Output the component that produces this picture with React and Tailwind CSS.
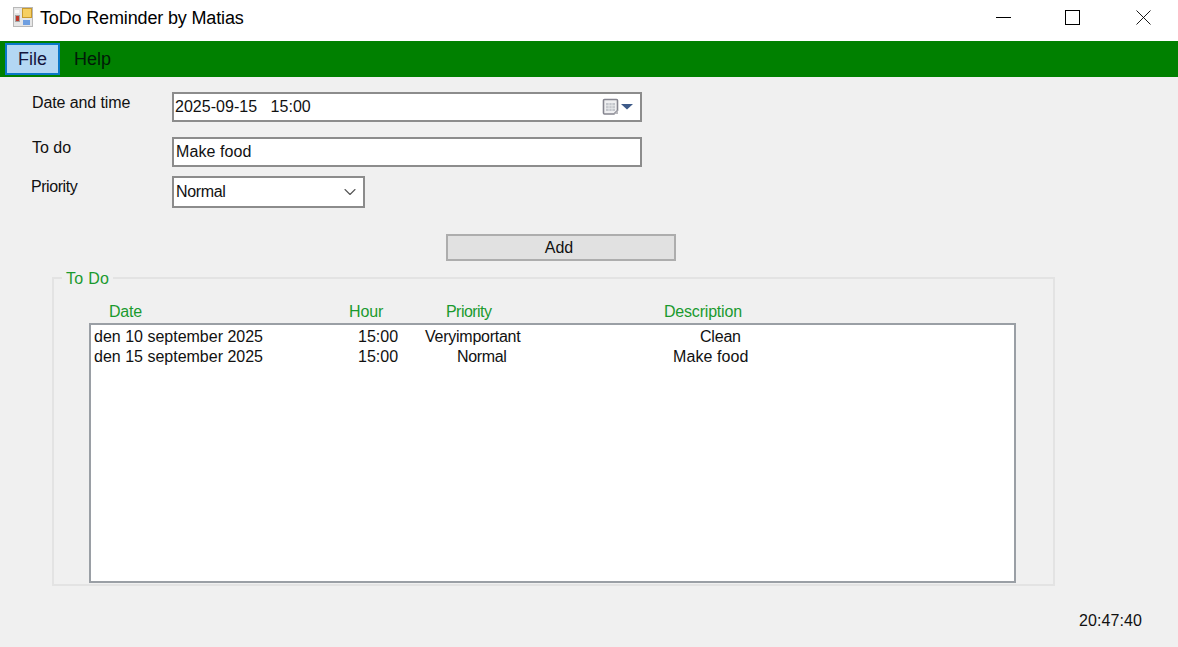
import { ChevronDown } from 'lucide-react';

const font = 'font-["Liberation_Sans",Arial,sans-serif]';

const todos = [
  { date: 'den 10 september 2025', hour: '15:00', priority: 'Veryimportant', priorityClass: 'pl-[27px] tracking-[-0.25px]', description: 'Clean', descClass: 'pl-[102px] tracking-[-0.2px]' },
  { date: 'den 15 september 2025', hour: '15:00', priority: 'Normal', priorityClass: 'pl-[59px] tracking-[-0.35px]', description: 'Make food', descClass: 'pl-[75px] tracking-[0.1px]' },
];

function AppIcon() {
  return (
    <svg width="20" height="20" viewBox="0 0 20 20" className="shrink-0">
      <rect x="0.5" y="0.5" width="19" height="19" fill="#e6e6e6" stroke="#b8b8b8" />
      <rect x="9.5" y="1.5" width="9" height="9" fill="#f6cf62" stroke="#c99a2e" />
      <rect x="2.5" y="8.5" width="4" height="6" fill="#c0392b" stroke="#a5a5a5" />
      <rect x="10" y="13" width="7" height="5" fill="#6f9fe0" />
      <rect x="2" y="3" width="4" height="3" fill="#fafafa" />
    </svg>
  );
}

function CalendarIcon() {
  return (
    <svg width="31" height="19" viewBox="0 0 31 19">
      <path d="M1.500 2.500a1 1 0 0 1 1-1h12a1 1 0 0 1 1 1v10l-3.500 3.500h-9.500a1 1 0 0 1-1-1z" fill="#efeff1" stroke="#85858f" strokeWidth="1.6" />
      <path d="M4 5h9v8H4z" fill="#c3c6cc" />
      <path d="M7 5v8M10 5v8M4 7.700h9M4 10.400h9" stroke="#e9eaec" strokeWidth="0.8" />
      <path d="M12 16l4-4v4z" fill="#b8b8bd" />
      <path d="M19 6h12l-6 5.500z" fill="#3d5a88" />
    </svg>
  );
}

export default function App() {
  return (
    <div className={`${font} w-[1178px] h-[647px] overflow-hidden flex flex-col bg-[#f0f0f0] text-[16px] leading-[18px] text-[#111]`}>
      {/* Title bar */}
      <div className="h-[41px] bg-white flex items-start">
        <div className="flex items-start pl-[13px] pt-[7px] gap-[7px] flex-1">
          <AppIcon />
          <span className="text-[18px] leading-[22px] tracking-[-0.15px] text-black">ToDo Reminder by Matias</span>
        </div>
        <div className="flex items-start pt-[10px] pr-[27px]">
          <svg width="15" height="15" viewBox="0 0 15 15">
            <path d="M0 7.500h15" stroke="#000" strokeWidth="1" />
          </svg>
          <svg width="15" height="15" viewBox="0 0 15 15" className="ml-[54px]">
            <rect x="0.500" y="0.500" width="14" height="14" fill="none" stroke="#000" strokeWidth="1" />
          </svg>
          <svg width="15" height="15" viewBox="0 0 15 15" className="ml-[56px]">
            <path d="M0.500 0.500l14 14M14.500 0.500l-14 14" stroke="#000" strokeWidth="0.9" />
          </svg>
        </div>
      </div>

      {/* Menu */}
      <div className="h-[36px] bg-[#008000] flex items-center pl-[5px] text-[18px]">
        <div className="w-[55px] h-[32px] bg-[#b3d7f3] border-2 border-[#0a78c8] flex items-center justify-center text-[#14143c]">File</div>
        <div className="ml-[14px] text-[#011a08]">Help</div>
      </div>

      {/* Form */}
      <div className="pt-[15px] flex flex-col">
        <div className="flex items-start h-[30px]">
          <span className="w-[172px] pl-[32px] pt-[2px] tracking-[-0.1px]">Date and time</span>
          <div className="w-[470px] h-[30px] bg-white border-2 border-[#8c8c8c] flex items-center justify-between pl-[1px] pr-[7px]">
            <span className="whitespace-pre tracking-[0.03px]">2025-09-15   15:00</span>
            <CalendarIcon />
          </div>
        </div>
        <div className="flex items-start h-[30px] mt-[15px]">
          <span className="w-[172px] pl-[32px] pt-[2px]">To do</span>
          <div className="w-[470px] h-[30px] bg-white border-2 border-[#8c8c8c] flex items-center pl-[2px] tracking-[0.1px]">Make food</div>
        </div>
        <div className="flex items-start h-[32px] mt-[9px]">
          <span className="w-[172px] pl-[31px] pt-[2px] tracking-[-0.45px]">Priority</span>
          <div className="w-[193px] h-[32px] bg-white border-2 border-[#8c8c8c] flex items-center justify-between pl-[2px] pr-[3px]">
            <span className="tracking-[-0.35px]">Normal</span>
            <ChevronDown className="w-[20px] h-[20px] text-[#555]" strokeWidth={1.3} />
          </div>
        </div>
        <div className="pl-[446px] mt-[26px]">
          <div className="w-[230px] h-[27px] bg-[#e1e1e1] border-2 border-[#adadad] flex items-center justify-center pr-[4px]">Add</div>
        </div>
      </div>

      {/* To Do group */}
      <div className="relative ml-[52px] mt-[16px] w-[1003px] h-[309px] border-2 border-[#e3e3e3] pl-[35px] pt-[24px]">
        <span className="absolute left-[8px] top-[-9px] bg-[#f0f0f0] px-[4px] text-[#1a9a2e] tracking-[0.3px]">To Do</span>
        <div className="flex h-[20px] text-[#1a9a2e]">
          <span className="w-[260px] pl-[20px] tracking-[-0.2px]">Date</span>
          <span className="w-[97px] tracking-[-0.1px]">Hour</span>
          <span className="w-[218px] tracking-[-0.55px]">Priority</span>
          <span className="tracking-[-0.2px]">Description</span>
        </div>
        <div className="w-[927px] h-[260px] bg-white border-2 border-[#9a9fa5] pl-[3px] pt-[2px] leading-[20px]">
          {todos.map((todo) => (
            <div key={todo.date} className="flex h-[20px] whitespace-nowrap">
              <span className="w-[264px]">{todo.date}</span>
              <span className="w-[40px]">{todo.hour}</span>
              <span className={`w-[200px] ${todo.priorityClass}`}>{todo.priority}</span>
              <span className={todo.descClass}>{todo.description}</span>
            </div>
          ))}
        </div>
      </div>

      {/* Clock */}
      <div className="flex justify-end pr-[36px] pt-[26px]">
        <span className="tracking-[0.1px]">20:47:40</span>
      </div>
    </div>
  );
}
